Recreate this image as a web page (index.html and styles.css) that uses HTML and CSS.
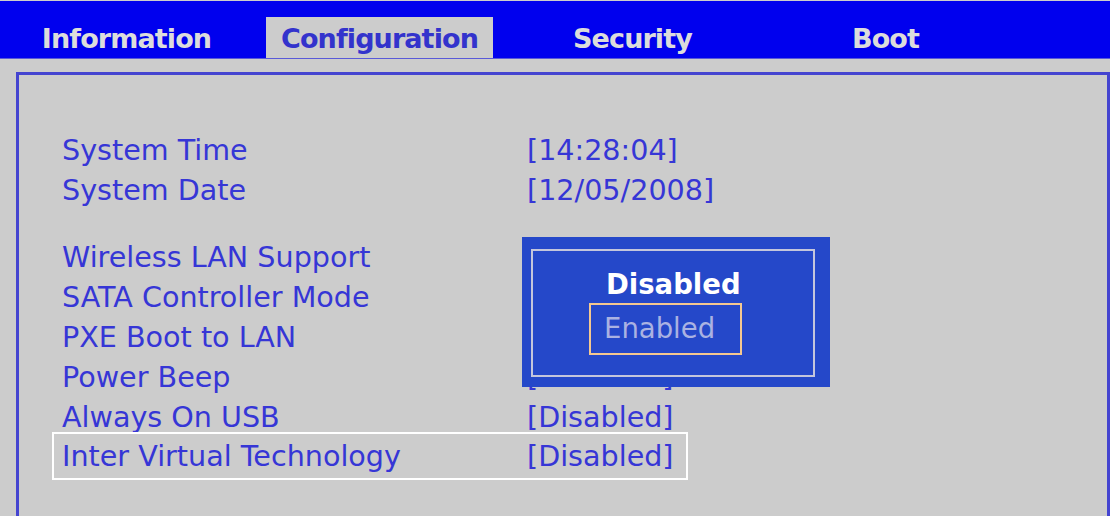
FILE: index.html
```html
<!DOCTYPE html>
<html>
<head>
<meta charset="utf-8">
<link rel="stylesheet" href="styles.css">
</head>
<body>
<nav class="tabbar">
  <div class="tab">Information</div>
  <div class="tab active">Configuration</div>
  <div class="tab">Security</div>
  <div class="tab">Boot</div>
</nav>
<main class="panel">
  <div class="group">
    <div class="row"><span class="label">System Time</span><span class="value">[14:28:04]</span></div>
    <div class="row"><span class="label">System Date</span><span class="value">[12/05/2008]</span></div>
  </div>
  <div class="group second">
    <div class="row"><span class="label">Wireless LAN Support</span><span class="value"></span></div>
    <div class="row"><span class="label">SATA Controller Mode</span><span class="value"></span></div>
    <div class="row"><span class="label">PXE Boot to LAN</span><span class="value"></span></div>
    <div class="row"><span class="label">Power Beep</span><span class="value">[Disabled]</span></div>
    <div class="row"><span class="label">Always On USB</span><span class="value">[Disabled]</span></div>
    <div class="row selected"><span class="label">Inter Virtual Technology</span><span class="value">[Disabled]</span></div>
  </div>
  <div class="popup">
    <div class="popup-inner">
      <div class="opt current">Disabled</div>
      <div class="opt focus">Enabled</div>
    </div>
  </div>
</main>
</body>
</html>
```

FILE: styles.css
```css
html, body {
  margin: 0;
  padding: 0;
  background: #cccccc;
  width: 1110px;
  height: 516px;
  overflow: hidden;
  font-family: "DejaVu Sans", Verdana, sans-serif;
}

body {
  padding-top: 1px;
  box-sizing: border-box;
}

.tabbar {
  display: flex;
  align-items: flex-end;
  height: 57px;
  background: #0000ee;
  border-bottom: 1px solid #5a5ad8;
}

.tab {
  width: 227px;
  margin: 0 13px;
  height: 41px;
  box-sizing: border-box;
  padding-top: 7px;
  text-align: center;
  font-weight: bold;
  font-size: 27px;
  letter-spacing: -0.9px;
  line-height: 30px;
  color: #dcdcdc;
}

.tab.active {
  background: #cccccc;
  color: #3333cc;
}

.panel {
  position: relative;
  margin: 13px 0 0 16px;
  height: 460px;
  border-top: 3px solid #4444d0;
  border-left: 3px solid #4444d0;
  border-right: 3px solid #4444d0;
  padding: 55px 0 0 35px;
  box-sizing: border-box;
  width: 1094px;
}

.group.second {
  margin-top: 27px;
}

.row {
  display: flex;
  width: 616px;
  padding: 2px 8px;
  font-size: 28.6px;
  line-height: 36px;
  height: 36px;
  color: #3636d6;
  white-space: nowrap;
}

.row .label {
  width: 465px;
  flex: none;
}

.row.selected {
  padding-top: 4px;
  padding-bottom: 4px;
  margin-top: -3px;
  outline: 2px solid #ffffff;
}

.popup {
  position: absolute;
  left: 503px;
  top: 162px;
  width: 308px;
  height: 150px;
  background: #2548c9;
  box-sizing: border-box;
  padding: 12px 15px 10px 9px;
}

.popup-inner {
  height: 100%;
  border: 2px solid #c4c6dc;
  box-sizing: border-box;
  display: flex;
  flex-direction: column;
  align-items: flex-start;
  padding-top: 15px;
}

.opt {
  font-size: 27.5px;
  white-space: nowrap;
}

.opt.current {
  margin-left: 73px;
  line-height: 36px;
  font-weight: bold;
  color: #ffffff;
}

.opt.focus {
  margin-top: 1px;
  margin-left: 56px;
  width: 153px;
  height: 52px;
  box-sizing: border-box;
  border: 2px solid #f4c890;
  padding-left: 13px;
  line-height: 46px;
  color: #aab2e2;
}
```
